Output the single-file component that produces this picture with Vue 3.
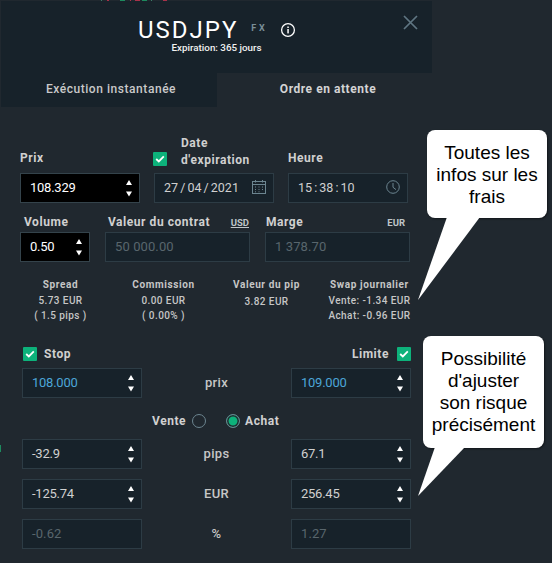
<script setup>
const candles = [
  { x: 101, w: 1, c: '#3b7d68' },
  { x: 107, w: 2, c: '#a8324a' },
  { x: 120, w: 5, c: '#1d8a5e' },
  { x: 130, w: 1, c: '#a8324a' },
  { x: 135, w: 5, c: '#a8324a' },
  { x: 142, w: 5, c: '#1d8a5e' },
  { x: 151, w: 1, c: '#3b7d68' },
  { x: 163, w: 4, c: '#a8324a' },
];

const stats = [
  { title: 'Spread', lines: ['5.73 EUR', '( 1.5 pips )'] },
  { title: 'Commission', lines: ['0.00 EUR', '( 0.00% )'] },
  { title: 'Valeur du pip', lines: ['3.82 EUR'], single: true },
  { title: 'Swap journalier', lines: ['Vente: -1.34 EUR', 'Achat: -0.96 EUR'] },
];
</script>

<template>
  <div class="page">
    <div class="top-strip">
      <i
        v-for="c in candles"
        :key="c.x"
        class="candle"
        :style="{ left: c.x + 'px', width: c.w + 'px', background: c.c }"
      ></i>
    </div>
    <i class="edge-tick"></i>

    <div class="panel">
      <header class="header">
        <div class="title-row">
          <span class="symbol">USDJPY</span>
          <span class="kind">FX</span>
          <svg class="info" width="16" height="16" viewBox="0 0 16 16">
            <circle cx="8" cy="8" r="6.4" fill="none" stroke="#fff" stroke-width="1.3" />
            <rect x="7.3" y="7" width="1.5" height="4.4" fill="#fff" />
            <rect x="7.3" y="4.5" width="1.5" height="1.5" fill="#fff" />
          </svg>
        </div>
        <div class="expiry">Expiration: 365 jours</div>
        <svg class="close" width="15" height="15" viewBox="0 0 15 15">
          <path d="M1 1L14 14M14 1L1 14" stroke="#5f7682" stroke-width="1.7" fill="none" />
        </svg>
      </header>

      <nav class="tabs">
        <div class="tab">Exécution instantanée</div>
        <div class="tab active">Ordre en attente</div>
      </nav>

      <section class="form">
        <div class="row-main">
          <div class="col">
            <label class="lbl">Prix</label>
            <div class="field black">
              <span>108.329</span>
              <svg class="spin" width="8" height="18" viewBox="0 0 8 18"><path d="M4 1L7 6H1Z M4 17.5L1 12.5H7Z" fill="#fff" /></svg>
            </div>
          </div>
          <div class="col">
            <div class="lbl-check">
              <span class="check">
                <svg width="10" height="8" viewBox="0 0 10 8"><path d="M1.2 4L3.8 6.4L8.8 1.4" stroke="#fff" stroke-width="1.8" fill="none" /></svg>
              </span>
              <label class="lbl two-line">Date d'expiration</label>
            </div>
            <div class="field">
              <span class="spaced">27 / 04 / 2021</span>
              <svg class="ico" width="14" height="14" viewBox="0 0 14 14" fill="none" stroke="#6c8590">
                <rect x="0.5" y="1.5" width="13" height="12" />
                <path d="M0.5 4.5H13.5M3.5 0V2.5M10.5 0V2.5" />
                <path d="M3 7H4M6.5 7H7.5M10 7H11M3 9.5H4M6.5 9.5H7.5M10 9.5H11M3 11.8H4M6.5 11.8H7.5" />
              </svg>
            </div>
          </div>
          <div class="col">
            <label class="lbl">Heure</label>
            <div class="field">
              <span class="spaced">15 : 38 : 10</span>
              <svg class="ico" width="14" height="14" viewBox="0 0 14 14" fill="none" stroke="#6c8590">
                <circle cx="7" cy="7" r="6.3" />
                <path d="M7 3V7.3L10 9.6" />
              </svg>
            </div>
          </div>
        </div>

        <div class="row-second">
          <div class="col">
            <label class="lbl lbl-volume">Volume</label>
            <div class="field black">
              <span>0.50</span>
              <svg class="spin" width="8" height="18" viewBox="0 0 8 18"><path d="M4 1L7 6H1Z M4 17.5L1 12.5H7Z" fill="#fff" /></svg>
            </div>
          </div>
          <div class="col">
            <div class="lbl-split contract">
              <label class="lbl">Valeur du contrat</label>
              <span class="unit link">USD</span>
            </div>
            <div class="field muted"><span>50 000.00</span></div>
          </div>
          <div class="col">
            <div class="lbl-split">
              <label class="lbl">Marge</label>
              <span class="unit">EUR</span>
            </div>
            <div class="field muted"><span>1 378.70</span></div>
          </div>
        </div>

        <div class="stats">
          <div v-for="s in stats" :key="s.title" class="stat" :class="{ single: s.single }">
            <div class="stat-title">{{ s.title }}</div>
            <div v-for="l in s.lines" :key="l" class="stat-line">{{ l }}</div>
          </div>
        </div>

        <div class="risk">
          <div class="risk-head">
            <div class="risk-toggle stop">
              <span class="check">
                <svg width="10" height="8" viewBox="0 0 10 8"><path d="M1.2 4L3.8 6.4L8.8 1.4" stroke="#fff" stroke-width="1.8" fill="none" /></svg>
              </span>
              <span class="lbl">Stop</span>
            </div>
            <div class="risk-toggle limit">
              <span class="lbl">Limite</span>
              <span class="check">
                <svg width="10" height="8" viewBox="0 0 10 8"><path d="M1.2 4L3.8 6.4L8.8 1.4" stroke="#fff" stroke-width="1.8" fill="none" /></svg>
              </span>
            </div>
          </div>

          <div class="risk-grid">
            <div class="field blue">
              <span>108.000</span>
              <svg class="spin" width="8" height="18" viewBox="0 0 8 18"><path d="M4 1L7 6H1Z M4 17.5L1 12.5H7Z" fill="#fff" /></svg>
            </div>
            <div class="mid">prix</div>
            <div class="field blue">
              <span>109.000</span>
              <svg class="spin" width="8" height="18" viewBox="0 0 8 18"><path d="M4 1L7 6H1Z M4 17.5L1 12.5H7Z" fill="#fff" /></svg>
            </div>
          </div>

          <div class="side">
            <span class="lbl">Vente</span>
            <span class="radio"></span>
            <span class="radio on"></span>
            <span class="lbl">Achat</span>
          </div>

          <div class="risk-grid">
            <div class="field">
              <span>-32.9</span>
              <svg class="spin" width="8" height="18" viewBox="0 0 8 18"><path d="M4 1L7 6H1Z M4 17.5L1 12.5H7Z" fill="#fff" /></svg>
            </div>
            <div class="mid">pips</div>
            <div class="field">
              <span>67.1</span>
              <svg class="spin" width="8" height="18" viewBox="0 0 8 18"><path d="M4 1L7 6H1Z M4 17.5L1 12.5H7Z" fill="#fff" /></svg>
            </div>

            <div class="field">
              <span>-125.74</span>
              <svg class="spin" width="8" height="18" viewBox="0 0 8 18"><path d="M4 1L7 6H1Z M4 17.5L1 12.5H7Z" fill="#fff" /></svg>
            </div>
            <div class="mid">EUR</div>
            <div class="field">
              <span>256.45</span>
              <svg class="spin" width="8" height="18" viewBox="0 0 8 18"><path d="M4 1L7 6H1Z M4 17.5L1 12.5H7Z" fill="#fff" /></svg>
            </div>

            <div class="field muted"><span>-0.62</span></div>
            <div class="mid">%</div>
            <div class="field muted"><span>1.27</span></div>
          </div>
        </div>
      </section>
    </div>

    <!-- bulles par dessus le formulaire -->
    <div class="bubble bubble-fees">
      Toutes les<br />infos sur les<br />frais
      <svg class="tail" width="70" height="84" viewBox="0 0 70 84">
        <path d="M29 0L0 83L62 0Z" fill="#fff" />
      </svg>
    </div>
    <div class="bubble bubble-risk">
      Possibilité<br />d'ajuster<br />son risque<br />précisément
      <svg class="tail" width="60" height="50" viewBox="0 0 60 50">
        <path d="M12 0L-5 49L42 0Z" fill="#fff" />
      </svg>
    </div>
  </div>
</template>

<style>
body {
  margin: 0;
  background: #20282f;
}
</style>

<style scoped>
.page {
  position: relative;
  width: 552px;
  height: 563px;
  overflow: hidden;
  background: #20282f;
  font-family: Roboto, "Liberation Sans", sans-serif;
  color: #d4d4d4;
}

.top-strip {
  position: absolute;
  left: 0;
  top: 0;
  width: 100%;
  height: 1px;
}

.candle {
  position: absolute;
  top: 0;
  height: 1px;
}

.edge-tick {
  position: absolute;
  left: 0;
  top: 445px;
  width: 1px;
  height: 7px;
  background: #1d8a5e;
}

.panel {
  width: 431px;
  margin-left: 1px;
  padding-top: 1px;
}

.header {
  position: relative;
  height: 72px;
  background: #17222a;
  box-sizing: border-box;
  padding-top: 17px;
}

.title-row {
  display: flex;
  align-items: center;
  height: 24px;
  padding-left: 137px;
}

.symbol {
  font-size: 24px;
  line-height: 24px;
  letter-spacing: 2px;
  color: #fff;
}

.kind {
  margin-left: 13px;
  margin-top: -4px;
  font-size: 9px;
  font-weight: 700;
  letter-spacing: 2.6px;
  color: #7a8e98;
}

.info {
  margin-left: 13px;
}

.expiry {
  text-align: center;
  font-size: 9.8px;
  font-weight: 500;
  line-height: 11px;
  color: #f2f2f2;
}

.close {
  position: absolute;
  left: 402px;
  top: 14px;
}

.tabs {
  display: flex;
  height: 34px;
}

.tab {
  box-sizing: border-box;
  width: 216px;
  padding-left: 4px;
  background: #17222a;
  font-size: 12px;
  font-weight: 500;
  letter-spacing: 0.55px;
  line-height: 33px;
  text-align: center;
  color: #c9c9c9;
}

.tab.active {
  width: 215px;
  padding-left: 7px;
  background: #20282f;
  font-weight: 700;
  color: #d4d4d4;
}

.form {
  padding: 27px 0 0 19px;
}

.col {
  display: flex;
  flex-direction: column;
}

.row-main {
  display: grid;
  grid-template-columns: repeat(3, 120px);
  column-gap: 14px;
  align-items: end;
}

.row-main .col {
  height: 69px;
  justify-content: flex-end;
}

.row-main .lbl {
  margin-bottom: 6px;
}

.lbl {
  font-size: 12px;
  font-weight: 700;
  line-height: 17px;
  letter-spacing: 0.55px;
  color: #d0d0d0;
}

.lbl-check {
  display: flex;
  align-items: center;
  gap: 14px;
}

.lbl-check .check {
  margin: 10px 0 0 -1px;
}

.lbl-check .lbl {
  margin-bottom: 4px;
}

.two-line {
  width: 75px;
}

.field {
  display: flex;
  align-items: center;
  justify-content: space-between;
  box-sizing: border-box;
  height: 30px;
  padding: 0 9px 2px;
  background: #17222a;
  border: 1px solid #2d3c45;
  font-size: 13px;
  letter-spacing: -0.25px;
  color: #d0d0d0;
}

.field.black {
  background: #000;
  color: #fff;
  border-color: #34434b;
}

.field.blue {
  color: #4ca6d8;
}

.field.muted {
  color: #59666d;
  letter-spacing: 0.1px;
}

.spaced {
  font-size: 12.5px;
  letter-spacing: 0;
  word-spacing: -1px;
}

.spin {
  flex: none;
  margin: 2px -3px 0 0;
}

.ico {
  flex: none;
  margin-right: -2px;
}

.row-second {
  display: grid;
  grid-template-columns: 70px 145px 145px;
  column-gap: 15px;
  margin-top: 11px;
}

.row-second .lbl,
.row-second .lbl-split {
  height: 18px;
}

.lbl-volume {
  padding-left: 4px;
}

.lbl-split {
  display: flex;
  align-items: baseline;
  justify-content: space-between;
  padding: 0 1px;
}

.lbl-split.contract {
  padding-left: 3px;
}

.unit {
  font-size: 9.5px;
  font-weight: 700;
  color: #bfc5c9;
  padding-right: 4px;
}

.unit.link {
  padding-right: 0;
  text-decoration: underline;
}

.stats {
  display: grid;
  grid-template-columns: repeat(4, 103px);
  margin: 16px 0 0 -11px;
}

.stat {
  text-align: center;
}

.stat-title {
  margin-bottom: 2px;
  font-size: 10px;
  font-weight: 700;
  letter-spacing: 0.6px;
  line-height: 14px;
  color: #c6c6c6;
}

.stat-line {
  font-size: 10px;
  font-weight: 500;
  letter-spacing: 0.42px;
  line-height: 14.5px;
  color: #c6c6c6;
}

.single .stat-line {
  margin-top: 3px;
}

.risk {
  width: 389px;
  margin: 24px 0 0 2px;
}

.risk-head {
  display: flex;
  justify-content: space-between;
  height: 21px;
}

.risk-toggle {
  display: flex;
  align-items: flex-start;
  gap: 7px;
}

.stop {
  padding-left: 1px;
}

.limit {
  gap: 8px;
}

.risk-toggle .lbl {
  line-height: 14px;
}

.check {
  display: flex;
  align-items: center;
  justify-content: center;
  flex: none;
  width: 14px;
  height: 14px;
  border-radius: 1px;
  background: #0db27b;
}

.risk-grid {
  display: grid;
  grid-template-columns: 120px 1fr 120px;
  row-gap: 10px;
}

.mid {
  text-align: center;
  font-size: 13px;
  font-weight: 500;
  line-height: 29px;
  letter-spacing: 0.3px;
  color: #c6c6c6;
}

.side {
  display: flex;
  align-items: center;
  box-sizing: border-box;
  height: 41px;
  padding: 5px 0 0 130px;
}

.radio {
  box-sizing: border-box;
  width: 14px;
  height: 14px;
  margin-left: 6px;
  border: 1px solid #6c8590;
  border-radius: 50%;
}

.radio.on {
  margin: 0 5px 0 20px;
  background: #0db27b;
  box-shadow: inset 0 0 0 1.5px #20282f;
}

.bubble {
  position: absolute;
  box-sizing: border-box;
  padding-top: 12px;
  background: #fff;
  border-radius: 8px;
  box-shadow: 1px 1px 2px rgba(0, 0, 0, 0.45);
  font-family: "Liberation Sans", Arial, sans-serif;
  font-size: 19px;
  line-height: 22px;
  text-align: center;
  color: #000;
}

.tail {
  position: absolute;
  overflow: visible;
}

.bubble-fees {
  left: 427px;
  top: 130px;
  width: 120px;
  height: 88px;
}

.bubble-fees .tail {
  left: -9px;
  top: 87px;
}

.bubble-risk {
  left: 423px;
  top: 336px;
  width: 121px;
  height: 112px;
}

.bubble-risk .tail {
  left: 0;
  top: 111px;
}
</style>
